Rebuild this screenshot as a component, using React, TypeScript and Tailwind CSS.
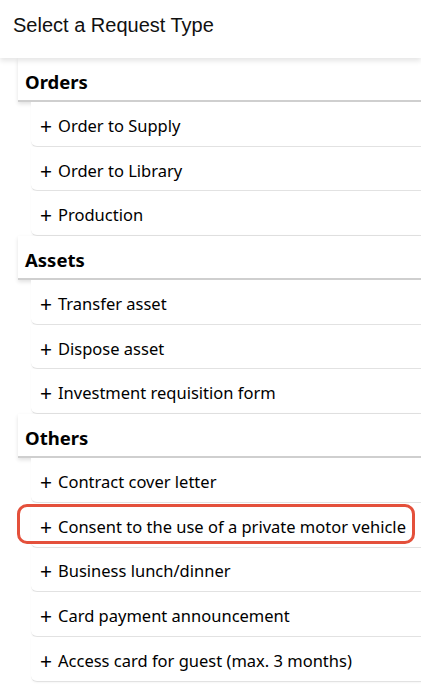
import React from "react";

const sections: { title: string; items: string[] }[] = [
  { title: "Orders", items: ["Order to Supply", "Order to Library", "Production"] },
  { title: "Assets", items: ["Transfer asset", "Dispose asset", "Investment requisition form"] },
  {
    title: "Others",
    items: [
      "Contract cover letter",
      "Consent to the use of a private motor vehicle",
      "Business lunch/dinner",
      "Card payment announcement",
      "Access card for guest (max. 3 months)",
    ],
  },
];

export default function App() {
  return (
    <div className="w-[421px] h-[684px] overflow-hidden bg-white">
      <div
        className="relative z-10 h-[58px] flex items-center pl-[13px] pb-[8px] bg-white shadow-[0_3px_5px_rgba(0,0,0,0.10)] text-[20px] text-[#111]"
        style={{ fontFamily: '"Liberation Sans", Arial, sans-serif' }}
      >
        Select a Request Type
      </div>
      <div className="pl-[18px]" style={{ fontFamily: '"Noto Sans", "Open Sans", sans-serif' }}>
        {sections.map((s) => (
          <div key={s.title}>
            <div className="relative h-[44px] flex items-center pl-[7px] pt-[6px] bg-white border-b-2 border-[#cfcfcf] shadow-[0_2px_4px_rgba(0,0,0,0.12)] text-[18.5px] font-bold text-black">
              {s.title}
            </div>
            {s.items.map((it) => (
              <div
                key={it}
                className="relative ml-[13px] h-[44.7px] flex items-center pl-[9px] pt-[5px] bg-white border-b border-[#e2e2e2] rounded-bl-[6px] shadow-[0_1px_2px_rgba(0,0,0,0.04)] text-[16.5px] text-black"
              >
                <span className="mr-[6px] text-[21px] leading-none font-normal">+</span>
                <span>{it}</span>
                {it.startsWith("Consent") && (
                  <div className="absolute left-[-14px] right-[6px] top-[1px] bottom-[3px] rounded-[10px] border-[3px] border-[#e4503b] pointer-events-none" />
                )}
              </div>
            ))}
          </div>
        ))}
      </div>
    </div>
  );
}
